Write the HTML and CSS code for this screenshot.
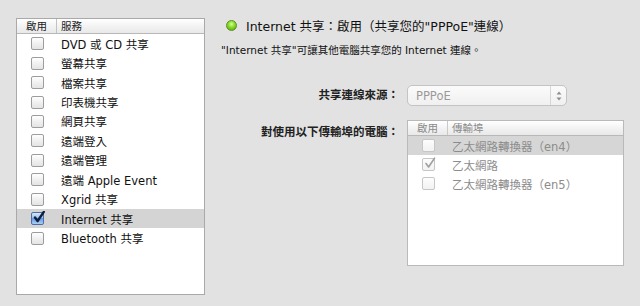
FILE: index.html
```html
<!DOCTYPE html>
<html lang="zh-Hant">
<head>
<meta charset="utf-8">
<link rel="stylesheet" href="styles.css">
</head>
<body>
<div class="page">
  <div class="services">
    <div class="thead">
      <div class="th c1">啟用</div>
      <div class="th c2">服務</div>
    </div>
    <div class="row"><span class="cb"></span><span class="lbl">DVD 或 CD 共享</span></div>
    <div class="row"><span class="cb"></span><span class="lbl">螢幕共享</span></div>
    <div class="row"><span class="cb"></span><span class="lbl">檔案共享</span></div>
    <div class="row"><span class="cb"></span><span class="lbl">印表機共享</span></div>
    <div class="row"><span class="cb"></span><span class="lbl">網頁共享</span></div>
    <div class="row"><span class="cb"></span><span class="lbl">遠端登入</span></div>
    <div class="row"><span class="cb"></span><span class="lbl">遠端管理</span></div>
    <div class="row"><span class="cb"></span><span class="lbl">遠端 Apple Event</span></div>
    <div class="row"><span class="cb"></span><span class="lbl">Xgrid 共享</span></div>
    <div class="row sel"><span class="cb on"><svg viewBox="0 0 13 13" width="13" height="13"><path d="M3 6.5 L5.6 10 L11.8 0.8" fill="none" stroke="#0d1f3c" stroke-width="2.4" stroke-linecap="round" stroke-linejoin="round"/></svg></span><span class="lbl">Internet 共享</span></div>
    <div class="row"><span class="cb"></span><span class="lbl">Bluetooth 共享</span></div>
  </div>
  <div class="detail">
    <div class="status"><span class="led"></span><span class="title">Internet 共享：啟用（共享您的"PPPoE"連線）</span></div>
    <div class="desc">"Internet 共享"可讓其他電腦共享您的 Internet 連線。</div>
    <div class="form">
      <div class="flabel l1">共享連線來源：</div>
      <div class="popup"><span class="ptext">PPPoE</span><span class="arrows"><svg viewBox="0 0 8 12" width="8" height="12"><path d="M1.5 4.5 L4 1.5 L6.5 4.5 Z M1.5 7.5 L4 10.5 L6.5 7.5 Z" fill="#8e8e8e"/></svg></span></div>
      <div class="flabel l2">對使用以下傳輸埠的電腦：</div>
      <div class="ports">
        <div class="thead">
          <div class="th p1">啟用</div>
          <div class="th p2">傳輸埠</div>
        </div>
        <div class="prow psel"><span class="cb dis"></span><span class="plbl">乙太網路轉換器（en4）</span></div>
        <div class="prow"><span class="cb dis"><svg viewBox="0 0 13 13" width="13" height="13"><path d="M3 6.5 L5.6 10 L11.5 1.2" fill="none" stroke="#a0a0a0" stroke-width="1.6" stroke-linecap="round" stroke-linejoin="round"/></svg></span><span class="plbl">乙太網路</span></div>
        <div class="prow"><span class="cb dis"></span><span class="plbl">乙太網路轉換器（en5）</span></div>
      </div>
    </div>
  </div>
</div>
</body>
</html>
```
FILE: styles.css
```css
* { box-sizing: border-box; }
html, body { margin: 0; padding: 0; }
body {
  width: 640px;
  height: 306px;
  background: #e2e2e2;
  font-family: "DejaVu Sans", "Noto Sans CJK TC", sans-serif;
  color: #111;
  overflow: hidden;
}
.page {
  display: flex;
  padding: 18px 0 0 16px;
}
.services {
  width: 189px;
  height: 277px;
  background: #fff;
  border: 1px solid #a9a9a9;
  flex: none;
}
.thead {
  display: flex;
  height: 15px;
  background: linear-gradient(#ffffff, #f1f1f1 60%, #e9e9e9);
  border-bottom: 1px solid #b8b8b8;
  font-size: 10.5px;
  color: #222;
  line-height: 14px;
}
.th { padding-left: 4px; }
.c1 { width: 40px; text-align: center; padding: 0; border-right: 1px solid #c2c2c2; }
.c2 { flex: 1; }
.row {
  display: flex;
  align-items: center;
  height: 19.45px;
  font-size: 11.5px;
}
.row.sel { background: #d4d4d4; }
.cb {
  width: 13px;
  height: 13px;
  border: 1px solid #9d9d9d;
  border-radius: 2px;
  background: linear-gradient(#ffffff, #f0f0f0 50%, #e4e4e4);
  margin-left: 14px;
  margin-right: 17px;
  flex: none;
  position: relative;
}
.cb svg { position: absolute; left: 0; top: -2px; }
.cb.on {
  border-color: #4d6ea3;
  background: linear-gradient(#d6e6fa, #9cc0ee 45%, #6a9ae0 50%, #a9cff6);
}
.detail {
  margin-left: 16px;
  flex: 1;
}
.status {
  display: flex;
  align-items: center;
  height: 16px;
  margin-top: -1px;
  margin-left: 5px;
}
.led {
  width: 11px;
  height: 11px;
  border-radius: 50%;
  background: radial-gradient(circle at 50% 35%, #d6ff9a 0%, #86dc22 45%, #4f9e0c 100%);
  border: 1px solid #5c8f2a;
  margin-right: 9px;
}
.title { font-size: 12.5px; color: #111; }
.desc {
  font-size: 10.5px;
  margin-top: 9px;
  color: #111;
}
.form {
  display: grid;
  grid-template-columns: 178px 160px;
  column-gap: 8px;
  row-gap: 15px;
  margin-top: 28px;
}
.flabel {
  text-align: right;
  font-size: 11.5px;
  font-weight: bold;
  color: #222;
}
.l1 { line-height: 21px; }
.l2 { line-height: 20px; margin-top: 1px; }
.popup {
  height: 21px;
  border: 1px solid #c4c4c4;
  border-radius: 5px;
  background: linear-gradient(#fbfbfb, #f0f0f0);
  display: flex;
  align-items: center;
  font-size: 11.5px;
  color: #9a9a9a;
}
.ptext { flex: 1; padding-left: 8px; }
.arrows {
  width: 16px;
  height: 19px;
  border-left: 1px solid #d6d6d6;
  display: flex;
  align-items: center;
  justify-content: center;
}
.ports {
  width: 217px;
  height: 146px;
  background: #fff;
  border: 1px solid #b9b9b9;
  margin-top: -1px;
}
.ports .thead { color: #8a8a8a; }
.p1 { width: 40px; text-align: center; padding: 0; border-right: 1px solid #c9c9c9; }
.p2 { flex: 1; }
.prow {
  display: flex;
  align-items: center;
  height: 19px;
  font-size: 11.5px;
  color: #8c8c8c;
}
.prow.psel { background: #d6d6d6; }
.cb.dis { border-color: #c6c6c6; background: linear-gradient(#fdfdfd, #f2f2f2); }
```
